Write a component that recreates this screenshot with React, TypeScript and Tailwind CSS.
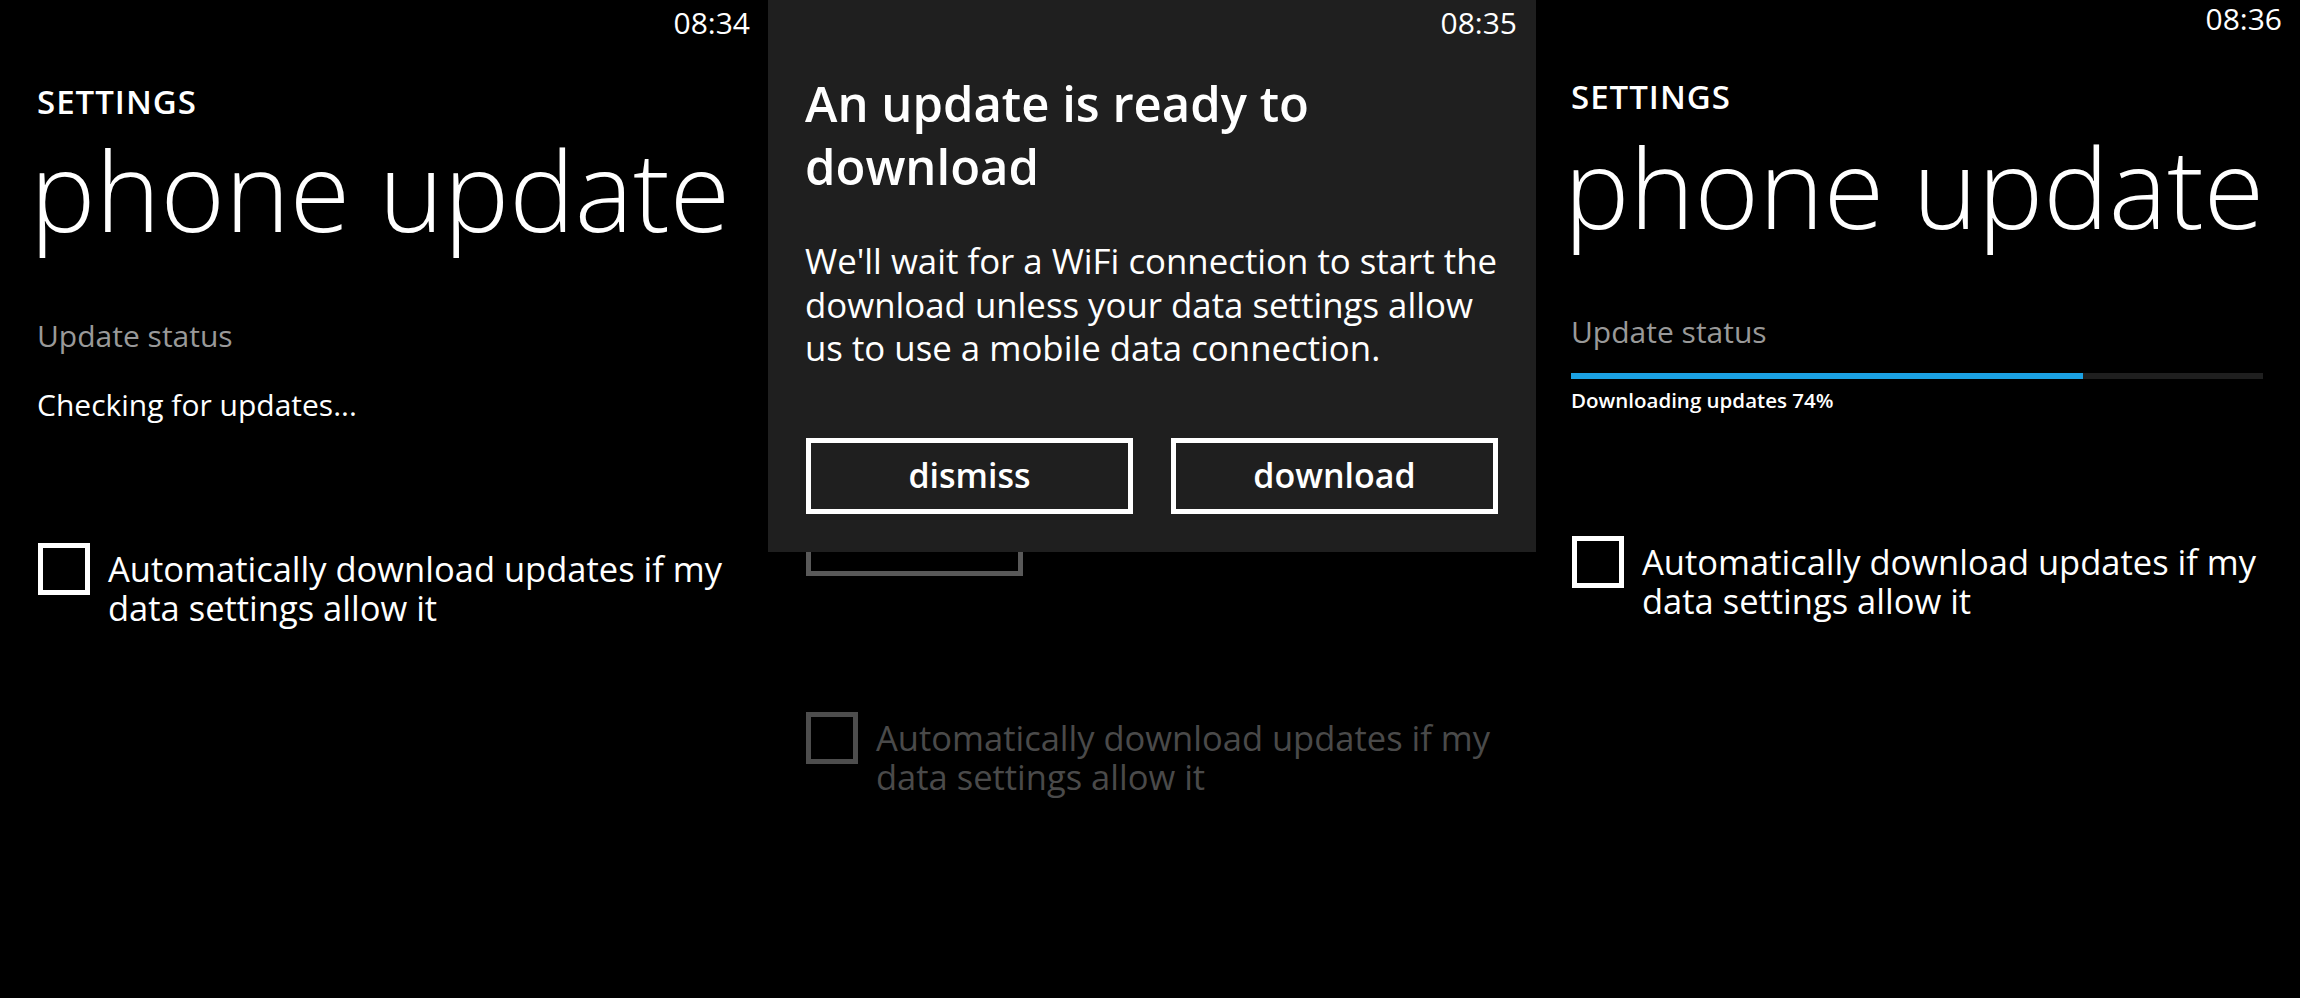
import React from "react";

const font = "font-['Open_Sans','Noto_Sans','Liberation_Sans',sans-serif]";

function Checkbox({ dim = false }: { dim?: boolean }) {
  return (
    <div
      className={
        dim
          ? "w-[52px] h-[52px] shrink-0 border-[5px] border-[#4d4d4d]"
          : "w-[52px] h-[52px] shrink-0 border-[5px] border-white"
      }
    />
  );
}

function Label({ dim = false }: { dim?: boolean }) {
  return (
    <div className={dim ? "mt-[6px] flex flex-col text-[34.5px] text-[#4a4a4a]" : "mt-[6px] flex flex-col text-[34.5px]"}>
      <div className="h-[39px] leading-[39px]">Automatically download updates if my</div>
      <div className="h-[39px] leading-[39px]">data settings allow it</div>
    </div>
  );
}

function Panel1() {
  return (
    <div className="flex flex-col w-[768px] h-full pl-[37px] bg-black">
      <div className="self-end mr-[18px] mt-[8px] text-[30px] leading-[30px] h-[30px]">08:34</div>
      <div className="mt-[48px] text-[33px] leading-[32px] h-[32px] font-semibold tracking-[1px]">SETTINGS</div>
      <div className="mt-[16px] ml-[-7px] text-[110px] leading-[110px] h-[110px] font-light">phone update</div>
      <div className="mt-[77px] text-[30px] leading-[30px] h-[30px] text-[#999999]">Update status</div>
      <div className="mt-[39px] text-[30px] leading-[30px] h-[30px]">Checking for updates...</div>
      <div className="mt-[123px] flex flex-row items-start gap-[18px] ml-[1px]">
        <Checkbox />
        <Label />
      </div>
    </div>
  );
}

function Panel2() {
  return (
    <div className="relative w-[768px] h-full bg-black">
      <div className="flex flex-col pl-[38px]">
        <div className="mt-[500px] w-[217px] h-[76px] border-[5px] border-[#595959]" />
        <div className="mt-[136px] flex flex-row items-start gap-[18px]">
          <Checkbox dim />
          <Label dim />
        </div>
      </div>
      <div className="absolute left-0 top-0 w-[768px] h-[552px] bg-[#1f1f1f] flex flex-col pl-[37px]">
        <div className="self-end mr-[19px] mt-[8px] text-[30px] leading-[30px] h-[30px]">08:35</div>
        <div className="mt-[34px] flex flex-col text-[49px] font-semibold">
          <div className="h-[63px] leading-[63px]">An update is ready to</div>
          <div className="h-[63px] leading-[63px]">download</div>
        </div>
        <div className="mt-[41px] flex flex-col text-[34.8px]">
          <div className="h-[43.5px] leading-[43.5px]">We'll wait for a WiFi connection to start the</div>
          <div className="h-[43.5px] leading-[43.5px]">download unless your data settings allow</div>
          <div className="h-[43.5px] leading-[43.5px]">us to use a mobile data connection.</div>
        </div>
        <div className="mt-[68px] flex flex-row gap-[38px] ml-[1px]">
          <div className="w-[327px] h-[76px] border-[5px] border-white flex items-center justify-center text-[34px] font-semibold">
            dismiss
          </div>
          <div className="w-[327px] h-[76px] border-[5px] border-white flex items-center justify-center text-[34px] font-semibold">
            download
          </div>
        </div>
      </div>
    </div>
  );
}

function Panel3() {
  return (
    <div className="flex flex-col w-[764px] h-full pl-[35px] bg-black">
      <div className="self-end mr-[18px] mt-[4px] text-[30px] leading-[30px] h-[30px]">08:36</div>
      <div className="mt-[47px] text-[33px] leading-[32px] h-[32px] font-semibold tracking-[1px]">SETTINGS</div>
      <div className="mt-[18px] ml-[-7px] text-[110px] leading-[110px] h-[110px] font-light">phone update</div>
      <div className="mt-[76px] text-[30px] leading-[30px] h-[30px] text-[#999999]">Update status</div>
      <div className="mt-[26px] w-[692px] h-[6px] bg-[#1f1f1f] flex">
        <div className="h-full bg-[#1ba1e2]" style={{ width: "74%" }} />
      </div>
      <div className="mt-[11px] text-[20.5px] leading-[21px] h-[21px] font-semibold">Downloading updates 74%</div>
      <div className="mt-[125px] flex flex-row items-start gap-[18px] ml-[1px]">
        <Checkbox />
        <Label />
      </div>
    </div>
  );
}

export default function App() {
  return (
    <div className={`flex flex-row w-[2300px] h-[998px] bg-black text-white ${font}`}>
      <Panel1 />
      <Panel2 />
      <Panel3 />
    </div>
  );
}
